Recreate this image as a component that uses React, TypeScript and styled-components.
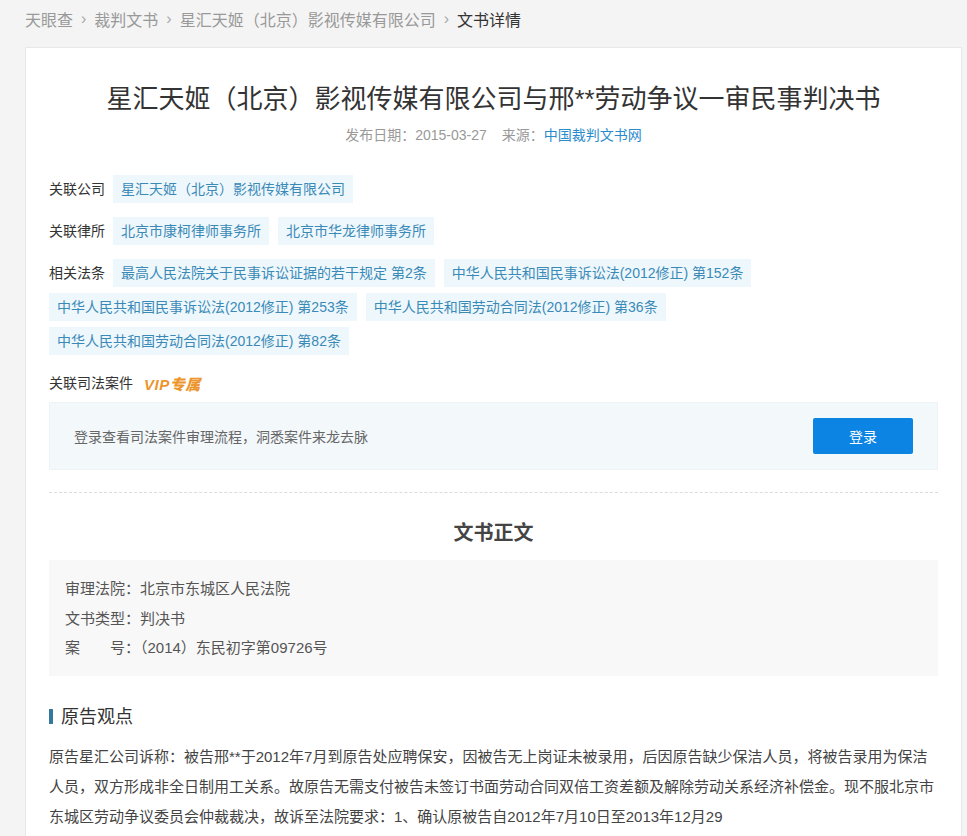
import React from "react";
import styled, { createGlobalStyle } from "styled-components";

const Global = createGlobalStyle`
  html, body { margin: 0; padding: 0; background: #f4f4f4; }
  body {
    font-family: "Liberation Sans", "Noto Sans CJK SC", sans-serif;
    color: #333;
  }
  * { box-sizing: border-box; }
`;

const Page = styled.div`
  padding: 0 5px 0 25px;
  min-height: 836px;
`;

const Crumbs = styled.nav`
  height: 38px;
  display: flex;
  align-items: center;
  font-size: 16px;
  color: #999;
  margin-bottom: 9px;
`;

const Crumb = styled.span<{ $current?: boolean }>`
  color: ${(p) => (p.$current ? "#333" : "#999")};
`;

const Sep = styled.span`
  color: #aaa;
  margin: 0 8px;
  font-size: 16px;
`;

const Card = styled.main`
  background: #fff;
  border: 1px solid #e8e8e8;
  border-bottom: none;
  padding: 34px 23px 20px;
  min-height: 789px;
`;

const Title = styled.h1`
  margin: 0;
  font-size: 26px;
  line-height: 34px;
  font-weight: normal;
  color: #333;
  text-align: center;
`;

const Meta = styled.div`
  margin-top: 9px;
  font-size: 14px;
  line-height: 20px;
  color: #999;
  text-align: center;
`;

const MetaItem = styled.span`
  & + & { margin-left: 15px; }
`;

const MetaLink = styled.span`
  color: #2b8ccc;
`;

const Relations = styled.section`
  margin-top: 30px;
`;

const Row = styled.div`
  display: flex;
  flex-wrap: wrap;
  align-items: center;
  column-gap: 9px;
  row-gap: 6px;
  margin-bottom: 14px;
`;

const Label = styled.span`
  font-size: 14px;
  line-height: 28px;
  color: #333;
  margin-right: -1px;
`;

const Tag = styled.span`
  display: inline-block;
  height: 28px;
  line-height: 28px;
  padding: 0 8px;
  font-size: 14px;
  color: #3a8ab8;
  background: #eef7fb;
`;

const Vip = styled.span`
  margin-left: 3px;
  font-size: 15px;
  font-weight: 900;
  font-style: italic;
  color: #ec952d;
  letter-spacing: 0.5px;
`;

const LoginBox = styled.div`
  margin-top: -9px;
  height: 68px;
  padding: 0 24px;
  display: flex;
  align-items: center;
  justify-content: space-between;
  background: #f3f8fb;
  border: 1px solid #eef3f6;
`;

const LoginText = styled.span`
  font-size: 14px;
  color: #666;
`;

const LoginButton = styled.button`
  width: 100px;
  height: 36px;
  border: none;
  border-radius: 2px;
  background: #0c84e4;
  color: #fff;
  font-family: inherit;
  font-size: 14px;
  cursor: pointer;
`;

const Divider = styled.hr`
  margin: 22px 0 0;
  border: none;
  border-top: 1px dashed #dcdcdc;
`;

const SectionTitle = styled.h2`
  margin: 26px 0 0;
  font-size: 20px;
  line-height: 28px;
  font-weight: bold;
  color: #444;
  text-align: center;
`;

const InfoBox = styled.div`
  margin-top: 13px;
  background: #f8f8f8;
  padding: 14px 16px 13px;
`;

const InfoLine = styled.div`
  font-size: 15px;
  line-height: 29.5px;
  color: #555;
`;

const SubHeading = styled.h3`
  margin: 28px 0 0;
  display: flex;
  align-items: center;
  font-size: 18px;
  line-height: 26px;
  font-weight: normal;
  color: #333;
  &::before {
    content: "";
    width: 4px;
    height: 15px;
    background: #35789f;
    margin-right: 8px;
  }
`;

const Paragraph = styled.p`
  margin: 12px 0 0;
  font-size: 15px;
  line-height: 30px;
  color: #444;
`;

const crumbs = ["天眼查", "裁判文书", "星汇天姬（北京）影视传媒有限公司", "文书详情"];

const lawyers = ["北京市康柯律师事务所", "北京市华龙律师事务所"];

const laws = [
  "最高人民法院关于民事诉讼证据的若干规定 第2条",
  "中华人民共和国民事诉讼法(2012修正) 第152条",
  "中华人民共和国民事诉讼法(2012修正) 第253条",
  "中华人民共和国劳动合同法(2012修正) 第36条",
  "中华人民共和国劳动合同法(2012修正) 第82条",
];

export default function App() {
  return (
    <>
      <Global />
      <Page>
        <Crumbs>
          {crumbs.map((c, i) => (
            <React.Fragment key={c}>
              {i > 0 && <Sep>›</Sep>}
              <Crumb $current={i === crumbs.length - 1}>{c}</Crumb>
            </React.Fragment>
          ))}
        </Crumbs>
        <Card>
          <Title>星汇天姬（北京）影视传媒有限公司与邢**劳动争议一审民事判决书</Title>
          <Meta>
            <MetaItem>发布日期：2015-03-27</MetaItem>
            <MetaItem>
              来源：<MetaLink>中国裁判文书网</MetaLink>
            </MetaItem>
          </Meta>
          <Relations>
            <Row>
              <Label>关联公司</Label>
              <Tag>星汇天姬（北京）影视传媒有限公司</Tag>
            </Row>
            <Row>
              <Label>关联律所</Label>
              {lawyers.map((l) => (
                <Tag key={l}>{l}</Tag>
              ))}
            </Row>
            <Row>
              <Label>相关法条</Label>
              {laws.map((l) => (
                <Tag key={l}>{l}</Tag>
              ))}
            </Row>
            <Row>
              <Label>关联司法案件</Label>
              <Vip>VIP专属</Vip>
            </Row>
          </Relations>
          <LoginBox>
            <LoginText>登录查看司法案件审理流程，洞悉案件来龙去脉</LoginText>
            <LoginButton>登录</LoginButton>
          </LoginBox>
          <Divider />
          <SectionTitle>文书正文</SectionTitle>
          <InfoBox>
            <InfoLine>审理法院：北京市东城区人民法院</InfoLine>
            <InfoLine>文书类型：判决书</InfoLine>
            <InfoLine>案　　号：（2014）东民初字第09726号</InfoLine>
          </InfoBox>
          <SubHeading>原告观点</SubHeading>
          <Paragraph>
            原告星汇公司诉称：被告邢**于2012年7月到原告处应聘保安，因被告无上岗证未被录用，后因原告缺少保洁人员，将被告录用为保洁人员，双方形成非全日制用工关系。故原告无需支付被告未签订书面劳动合同双倍工资差额及解除劳动关系经济补偿金。现不服北京市东城区劳动争议委员会仲裁裁决，故诉至法院要求：1、确认原被告自2012年7月10日至2013年12月29
          </Paragraph>
        </Card>
      </Page>
    </>
  );
}
